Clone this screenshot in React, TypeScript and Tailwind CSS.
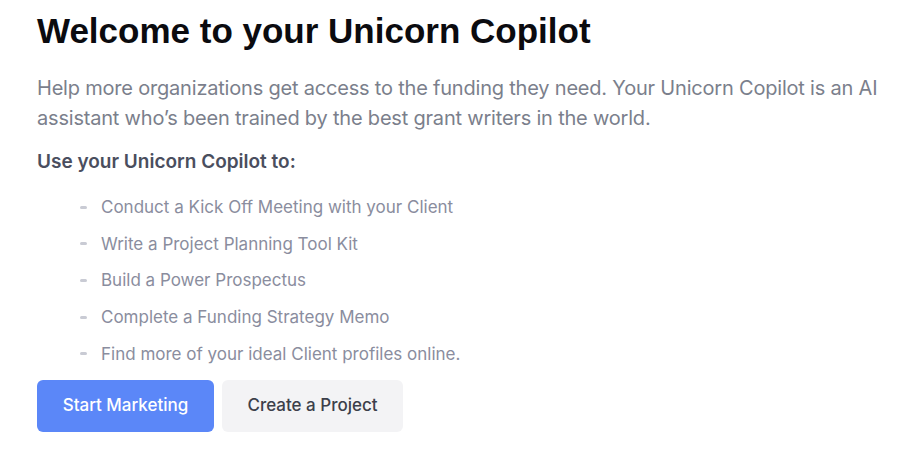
import React from "react";

const items = [
  "Conduct a Kick Off Meeting with your Client",
  "Write a Project Planning Tool Kit",
  "Build a Power Prospectus",
  "Complete a Funding Strategy Memo",
  "Find more of your ideal Client profiles online.",
];

export default function App() {
  return (
    <div className="w-[922px] h-[457px] bg-white overflow-hidden" style={{ fontFamily: "Inter, 'Noto Sans', sans-serif" }}>
      <div className="pl-[37px] pt-[11px]">
        <h1 className="text-[35px] leading-[40px] font-bold text-[#0b0b0f]" style={{ fontFamily: "'Liberation Sans', Arial, sans-serif" }}>
          Welcome to your Unicorn Copilot
        </h1>
        <p className="mt-[22px] text-[20px] leading-[30px] text-[#7b7f8c] tracking-[-0.2px] max-w-[870px]">
          Help more organizations get access to the funding they need. Your Unicorn Copilot is an AI assistant who’s been trained by the best grant writers in the world.
        </p>
        <p className="mt-[17px] text-[19px] leading-[24px] font-semibold text-[#4a4e5e]">Use your Unicorn Copilot to:</p>
        <ul className="mt-[21px] pl-[43px] flex flex-col gap-[12.7px]">
          {items.map((t) => (
            <li key={t} className="flex items-center gap-[14px] text-[17px] leading-[24px] text-[#8a8d9e]">
              <span className="w-[7px] h-[3px] rounded-sm bg-[#c9cbd4]" />
              <span>{t}</span>
            </li>
          ))}
        </ul>
        <div className="mt-[14px] flex gap-[8px]">
          <button className="w-[177px] h-[52px] rounded-[6px] bg-[#5b87f8] text-white text-[17px] font-medium">
            Start Marketing
          </button>
          <button className="w-[181px] h-[52px] rounded-[6px] bg-[#f3f3f5] text-[#3c3f4a] text-[17px] font-medium">
            Create a Project
          </button>
        </div>
      </div>
    </div>
  );
}
